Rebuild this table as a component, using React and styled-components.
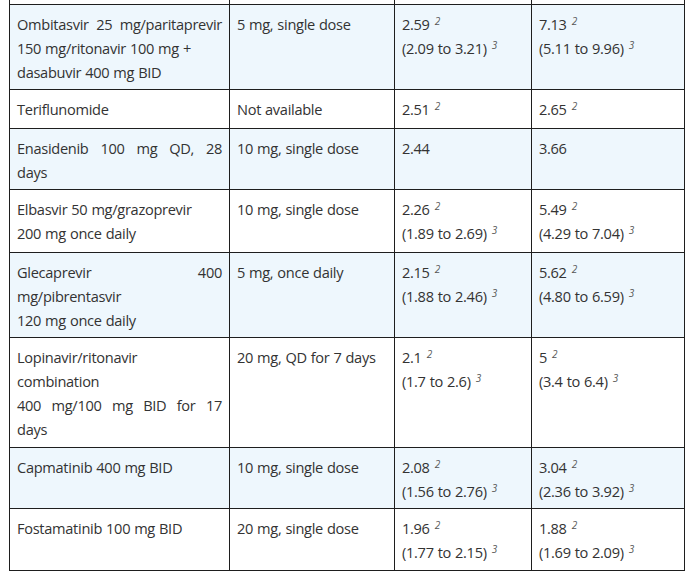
import React from 'react';
import styled, { createGlobalStyle } from 'styled-components';

const GlobalStyle = createGlobalStyle`
  html, body {
    margin: 0;
    padding: 0;
    background: #ffffff;
  }
  body {
    font-family: 'Open Sans', 'Noto Sans', sans-serif;
    color: #333333;
  }
`;

const Page = styled.div`
  width: 688px;
  height: 578px;
  overflow: hidden;
  padding-left: 9px;
  box-sizing: border-box;
`;

const Table = styled.table`
  border-collapse: collapse;
  table-layout: fixed;
  width: 675px;
  margin-top: -1px;
`;

const Row = styled.tr`
  background: ${(props) => (props.$shaded ? '#eef7fd' : '#ffffff')};
`;

const Cell = styled.td`
  border: 1px solid #1e1e1e;
  padding: 7px 7px 0 7px;
  vertical-align: top;
  font-size: 14.6px;
  letter-spacing: -0.3px;
  word-spacing: 0.5px;
  line-height: 24px;
  color: #333333;
  height: ${(props) => props.$height || 'auto'};
  box-sizing: border-box;
`;

const Line = styled.span`
  display: block;
  text-align: ${(props) => (props.$spread ? 'justify' : 'left')};
  text-align-last: ${(props) => (props.$spread ? 'justify' : 'left')};
  white-space: ${(props) => (props.$spread ? 'normal' : 'nowrap')};
`;

const Sup = styled.sup`
  font-size: 10px;
  font-style: italic;
  color: #555555;
  vertical-align: 5px;
  line-height: 0;
  margin-left: 5px;
`;

const rows = [
  {
    drug: [
      ['Ombitasvir 25 mg/paritaprevir', true],
      ['150 mg/ritonavir 100 mg +'],
      ['dasabuvir 400 mg BID'],
    ],
    dose: '5 mg, single dose',
    a: ['2.59', '2.09 to 3.21'],
    b: ['7.13', '5.11 to 9.96'],
    h: '85px',
  },
  {
    drug: [['Teriflunomide']],
    dose: 'Not available',
    a: ['2.51'],
    b: ['2.65'],
    h: '39px',
  },
  {
    drug: [['Enasidenib 100 mg QD, 28', true], ['days']],
    dose: '10 mg, single dose',
    a: ['2.44', null, true],
    b: ['3.66', null, true],
    h: '61px',
  },
  {
    drug: [['Elbasvir 50 mg/grazoprevir'], ['200 mg once daily']],
    dose: '10 mg, single dose',
    a: ['2.26', '1.89 to 2.69'],
    b: ['5.49', '4.29 to 7.04'],
    h: '63px',
  },
  {
    drug: [['Glecaprevir 400', true], ['mg/pibrentasvir'], ['120 mg once daily']],
    dose: '5 mg, once daily',
    a: ['2.15', '1.88 to 2.46'],
    b: ['5.62', '4.80 to 6.59'],
    h: '85px',
  },
  {
    drug: [
      ['Lopinavir/ritonavir'],
      ['combination'],
      ['400 mg/100 mg BID for 17', true],
      ['days'],
    ],
    dose: '20 mg, QD for 7 days',
    a: ['2.1', '1.7 to 2.6'],
    b: ['5', '3.4 to 6.4'],
    h: '110px',
  },
  {
    drug: [['Capmatinib 400 mg BID']],
    dose: '10 mg, single dose',
    a: ['2.08', '1.56 to 2.76'],
    b: ['3.04', '2.36 to 3.92'],
    h: '61px',
  },
  {
    drug: [['Fostamatinib 100 mg BID']],
    dose: '20 mg, single dose',
    a: ['1.96', '1.77 to 2.15'],
    b: ['1.88', '1.69 to 2.09'],
    h: '62px',
  },
];

function Ratio({ value }) {
  const [point, range, bare] = value;
  return (
    <>
      <Line>
        {point}
        {!bare && <Sup>2</Sup>}
      </Line>
      {range && (
        <Line>
          ({range})<Sup>3</Sup>
        </Line>
      )}
    </>
  );
}

export default function App() {
  return (
    <Page>
      <GlobalStyle />
      <Table>
        <colgroup>
          <col style={{ width: '220px' }} />
          <col style={{ width: '165px' }} />
          <col style={{ width: '137px' }} />
          <col style={{ width: '153px' }} />
        </colgroup>
        <tbody>
          <Row>
            <Cell $height="5px" style={{ padding: 0 }} />
            <Cell style={{ padding: 0 }} />
            <Cell style={{ padding: 0 }} />
            <Cell style={{ padding: 0 }} />
          </Row>
          {rows.map((r, i) => (
            <Row key={i} $shaded={i % 2 === 0}>
              <Cell $height={r.h}>
                {r.drug.map(([text, spread], j) => (
                  <Line key={j} $spread={spread}>
                    {text}
                  </Line>
                ))}
              </Cell>
              <Cell $height={r.h}>{r.dose}</Cell>
              <Cell $height={r.h}>
                <Ratio value={r.a} />
              </Cell>
              <Cell $height={r.h}>
                <Ratio value={r.b} />
              </Cell>
            </Row>
          ))}
        </tbody>
      </Table>
    </Page>
  );
}
